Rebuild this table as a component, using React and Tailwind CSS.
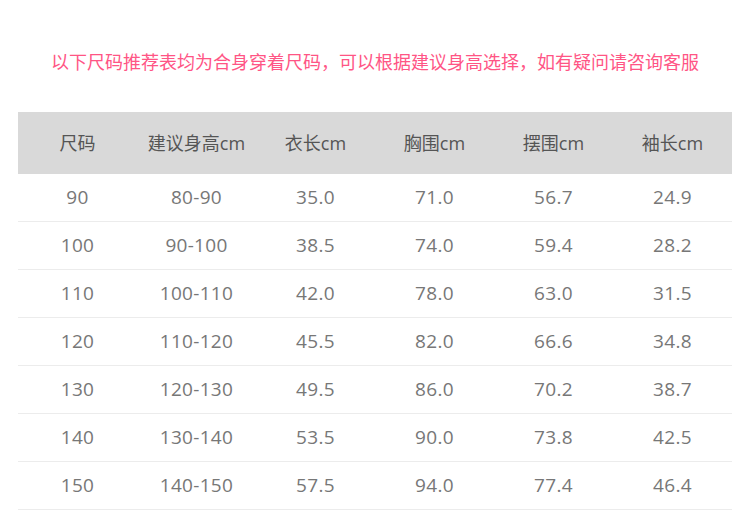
const headers = ["尺码", "建议身高cm", "衣长cm", "胸围cm", "摆围cm", "袖长cm"];
const rows = [
  ["90", "80-90", "35.0", "71.0", "56.7", "24.9"],
  ["100", "90-100", "38.5", "74.0", "59.4", "28.2"],
  ["110", "100-110", "42.0", "78.0", "63.0", "31.5"],
  ["120", "110-120", "45.5", "82.0", "66.6", "34.8"],
  ["130", "120-130", "49.5", "86.0", "70.2", "38.7"],
  ["140", "130-140", "53.5", "90.0", "73.8", "42.5"],
  ["150", "140-150", "57.5", "94.0", "77.4", "46.4"],
];

export default function App() {
  return (
    <div
      className="w-[750px] h-[510px] bg-white overflow-hidden"
      style={{ fontFamily: '"Open Sans", "Noto Sans CJK SC", sans-serif' }}
    >
      <div className="h-[112px] pt-[50px] text-center text-[18px] leading-[24px] text-[#ff5585]">
        以下尺码推荐表均为合身穿着尺码，可以根据建议身高选择，如有疑问请咨询客服
      </div>
      <div className="mx-[18px] w-[714px]">
        <div className="grid grid-cols-6 h-[62px] bg-[#d9d9d9] items-center text-[18px] text-[#555]">
          {headers.map((h) => (
            <div key={h} className="text-center">{h}</div>
          ))}
        </div>
        {rows.map((r, i) => (
          <div
            key={i}
            className="grid grid-cols-6 h-[48px] border-b border-[#ececec] items-center text-[19px] tracking-[0.3px] text-[#777]"
          >
            {r.map((c, j) => (
              <div key={j} className="text-center">{c}</div>
            ))}
          </div>
        ))}
      </div>
    </div>
  );
}
